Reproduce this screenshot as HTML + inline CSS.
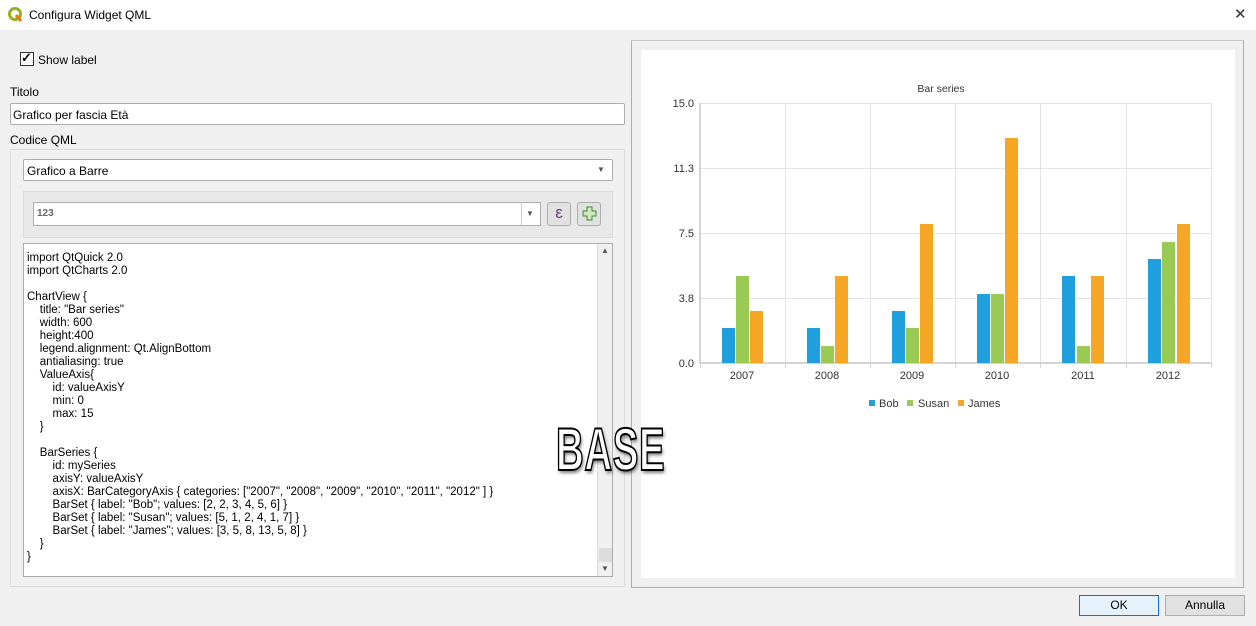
<!DOCTYPE html>
<html><head><meta charset="utf-8"><style>
*{margin:0;padding:0;box-sizing:border-box}
body{width:1256px;height:626px;background:#f0f0f0;font-family:"Liberation Sans",sans-serif;font-size:12px;color:#000;position:relative;overflow:hidden}
.a{position:absolute}
.box{position:absolute;background:#fff;border:1px solid #adadad}
pre{font-family:"Liberation Sans",sans-serif;font-size:11.5px;line-height:13px}
.btn{position:absolute;background:#e1e1e1;border:1px solid #adadad;text-align:center;line-height:19px}
</style></head><body>
<div class="a" style="left:0;top:0;width:1256px;height:30px;background:#fff"></div>
<svg class="a" style="left:7px;top:6px" width="17" height="17" viewBox="0 0 17 17"><circle cx="8" cy="8" r="5.5" fill="none" stroke="#93b023" stroke-width="3"/><path d="M9 9 L14 15" stroke="#ee7913" stroke-width="3"/></svg>
<div class="a" style="left:29px;top:8px;font-size:12px">Configura Widget QML</div>
<div class="a" style="left:1234px;top:5px;font-size:15px;color:#333">✕</div>

<div class="box" style="left:20px;top:52px;width:14px;height:14px;border-color:#333"></div>
<div class="a" style="left:21px;top:50px;font-size:13px;font-weight:bold">✓</div>
<div class="a" style="left:38px;top:53px">Show label</div>
<div class="a" style="left:10px;top:85px">Titolo</div>
<div class="box" style="left:10px;top:103px;width:615px;height:22px;border-radius:2px"></div>
<div class="a" style="left:13px;top:108px">Grafico per fascia Età</div>
<div class="a" style="left:10px;top:133px">Codice QML</div>
<div class="a" style="left:10px;top:149px;width:615px;height:438px;border:1px solid #dcdcdc"></div>
<div class="box" style="left:23px;top:159px;width:590px;height:22px;border-radius:2px"></div>
<div class="a" style="left:27px;top:164px">Grafico a Barre</div>
<div class="a" style="left:597px;top:165px;font-size:8px;color:#555">▼</div>
<div class="a" style="left:23px;top:191px;width:590px;height:47px;background:#e8e8e8;border:1px solid #dcdcdc"></div>
<div class="box" style="left:33px;top:202px;width:508px;height:24px"></div>
<div class="a" style="left:37px;top:208px;font-size:10px;color:#666;font-weight:bold">123</div>
<div class="a" style="left:521px;top:203px;width:1px;height:22px;background:#ccc"></div>
<div class="a" style="left:526px;top:209px;font-size:8px;color:#555">▼</div>
<div class="btn" style="left:547px;top:202px;width:24px;height:24px;border-radius:3px;color:#6a3b8a;font-size:17px;line-height:20px">ε</div>
<div class="btn" style="left:577px;top:202px;width:24px;height:24px;border-radius:3px"></div>
<svg class="a" style="left:582px;top:206px" width="15" height="15"><path d="M5 1h5v4h4v5h-4v4H5v-4H1V5h4z" fill="#cfe8c4" stroke="#3e8a2e"/></svg>

<div class="box" style="left:23px;top:243px;width:590px;height:334px"></div>
<div class="a" style="left:597px;top:244px;width:15px;height:332px;background:#f0f0f0;border-left:1px solid #ddd"></div>
<div class="a" style="left:601px;top:246px;font-size:8px;color:#555">▲</div>
<div class="a" style="left:599px;top:548px;width:13px;height:14px;background:#dcdcdc"></div>
<div class="a" style="left:601px;top:564px;font-size:8px;color:#555">▼</div>
<pre class="a" style="left:27px;top:252px">import QtQuick 2.0
import QtCharts 2.0

ChartView {
    title: "Bar series"
    width: 600
    height:400
    legend.alignment: Qt.AlignBottom
    antialiasing: true
    ValueAxis{
        id: valueAxisY
        min: 0
        max: 15
    }

    BarSeries {
        id: mySeries
        axisY: valueAxisY
        axisX: BarCategoryAxis { categories: ["2007", "2008", "2009", "2010", "2011", "2012" ] }
        BarSet { label: "Bob"; values: [2, 2, 3, 4, 5, 6] }
        BarSet { label: "Susan"; values: [5, 1, 2, 4, 1, 7] }
        BarSet { label: "James"; values: [3, 5, 8, 13, 5, 8] }
    }
}</pre>

<div class="a" style="left:631px;top:40px;width:613px;height:548px;border:1px solid #adadad;border-top-color:#c8c8c8"></div>
<div class="a" style="left:641px;top:50px;width:594px;height:528px;background:#fff"></div>
<svg class="a" style="left:0;top:0" width="1256" height="626" font-family="Liberation Sans, sans-serif" font-size="11" fill="#333">
<text x="941" y="92" text-anchor="middle" font-size="10.5">Bar series</text>
<g stroke="#e4e4e4" stroke-width="1">
<line x1="700" y1="103.5" x2="1211" y2="103.5"/><line x1="700" y1="168.5" x2="1211" y2="168.5"/><line x1="700" y1="233.5" x2="1211" y2="233.5"/><line x1="700" y1="298.5" x2="1211" y2="298.5"/>
<line x1="785.5" y1="103" x2="785.5" y2="363"/><line x1="870.5" y1="103" x2="870.5" y2="363"/><line x1="955.5" y1="103" x2="955.5" y2="363"/><line x1="1040.5" y1="103" x2="1040.5" y2="363"/><line x1="1126.5" y1="103" x2="1126.5" y2="363"/><line x1="1211.5" y1="103" x2="1211.5" y2="363"/>
</g>
<g stroke="#d4d4d4" stroke-width="2"><line x1="700" y1="103" x2="700" y2="364"/><line x1="699" y1="363" x2="1212" y2="363"/></g>
<g stroke="#d4d4d4"><line x1="700.5" y1="363" x2="700.5" y2="368"/><line x1="785.5" y1="363" x2="785.5" y2="368"/><line x1="870.5" y1="363" x2="870.5" y2="368"/><line x1="955.5" y1="363" x2="955.5" y2="368"/><line x1="1040.5" y1="363" x2="1040.5" y2="368"/><line x1="1126.5" y1="363" x2="1126.5" y2="368"/><line x1="1211.5" y1="363" x2="1211.5" y2="368"/></g>
<g text-anchor="end"><text x="694" y="107">15.0</text><text x="694" y="172">11.3</text><text x="694" y="237">7.5</text><text x="694" y="302">3.8</text><text x="694" y="367">0.0</text></g>
<g text-anchor="middle"><text x="742" y="379">2007</text><text x="827" y="379">2008</text><text x="912" y="379">2009</text><text x="997" y="379">2010</text><text x="1083" y="379">2011</text><text x="1168" y="379">2012</text></g>
<g fill="#209fdf"><rect x="722" y="328" width="13" height="35"/><rect x="807" y="328" width="13" height="35"/><rect x="892" y="311" width="13" height="52"/><rect x="977" y="294" width="13" height="69"/><rect x="1062" y="276" width="13" height="87"/><rect x="1148" y="259" width="13" height="104"/></g>
<g fill="#99ca53"><rect x="736" y="276" width="13" height="87"/><rect x="821" y="346" width="13" height="17"/><rect x="906" y="328" width="13" height="35"/><rect x="991" y="294" width="13" height="69"/><rect x="1077" y="346" width="13" height="17"/><rect x="1162" y="242" width="13" height="121"/></g>
<g fill="#f6a625"><rect x="750" y="311" width="13" height="52"/><rect x="835" y="276" width="13" height="87"/><rect x="920" y="224" width="13" height="139"/><rect x="1005" y="138" width="13" height="225"/><rect x="1091" y="276" width="13" height="87"/><rect x="1177" y="224" width="13" height="139"/></g>
<rect x="869" y="400" width="6" height="6" fill="#209fdf"/><text x="879" y="407">Bob</text>
<rect x="907" y="400" width="6" height="6" fill="#99ca53"/><text x="918" y="407">Susan</text>
<rect x="958" y="400" width="6" height="6" fill="#f6a625"/><text x="968" y="407">James</text>
</svg>

<div class="a" style="left:556px;top:420px;font-family:'Liberation Sans',sans-serif;font-weight:bold;font-size:60px;line-height:60px;color:#fff;-webkit-text-stroke:2px #000;text-shadow:2px 3px 4px rgba(0,0,0,.5);transform:scaleX(0.64);transform-origin:left top;letter-spacing:1px">BASE</div>

<div class="btn" style="left:1079px;top:595px;width:80px;height:21px;border-color:#0078d7;background:#e5f1fb">OK</div>
<div class="btn" style="left:1165px;top:595px;width:80px;height:21px">Annulla</div>
</body></html>
